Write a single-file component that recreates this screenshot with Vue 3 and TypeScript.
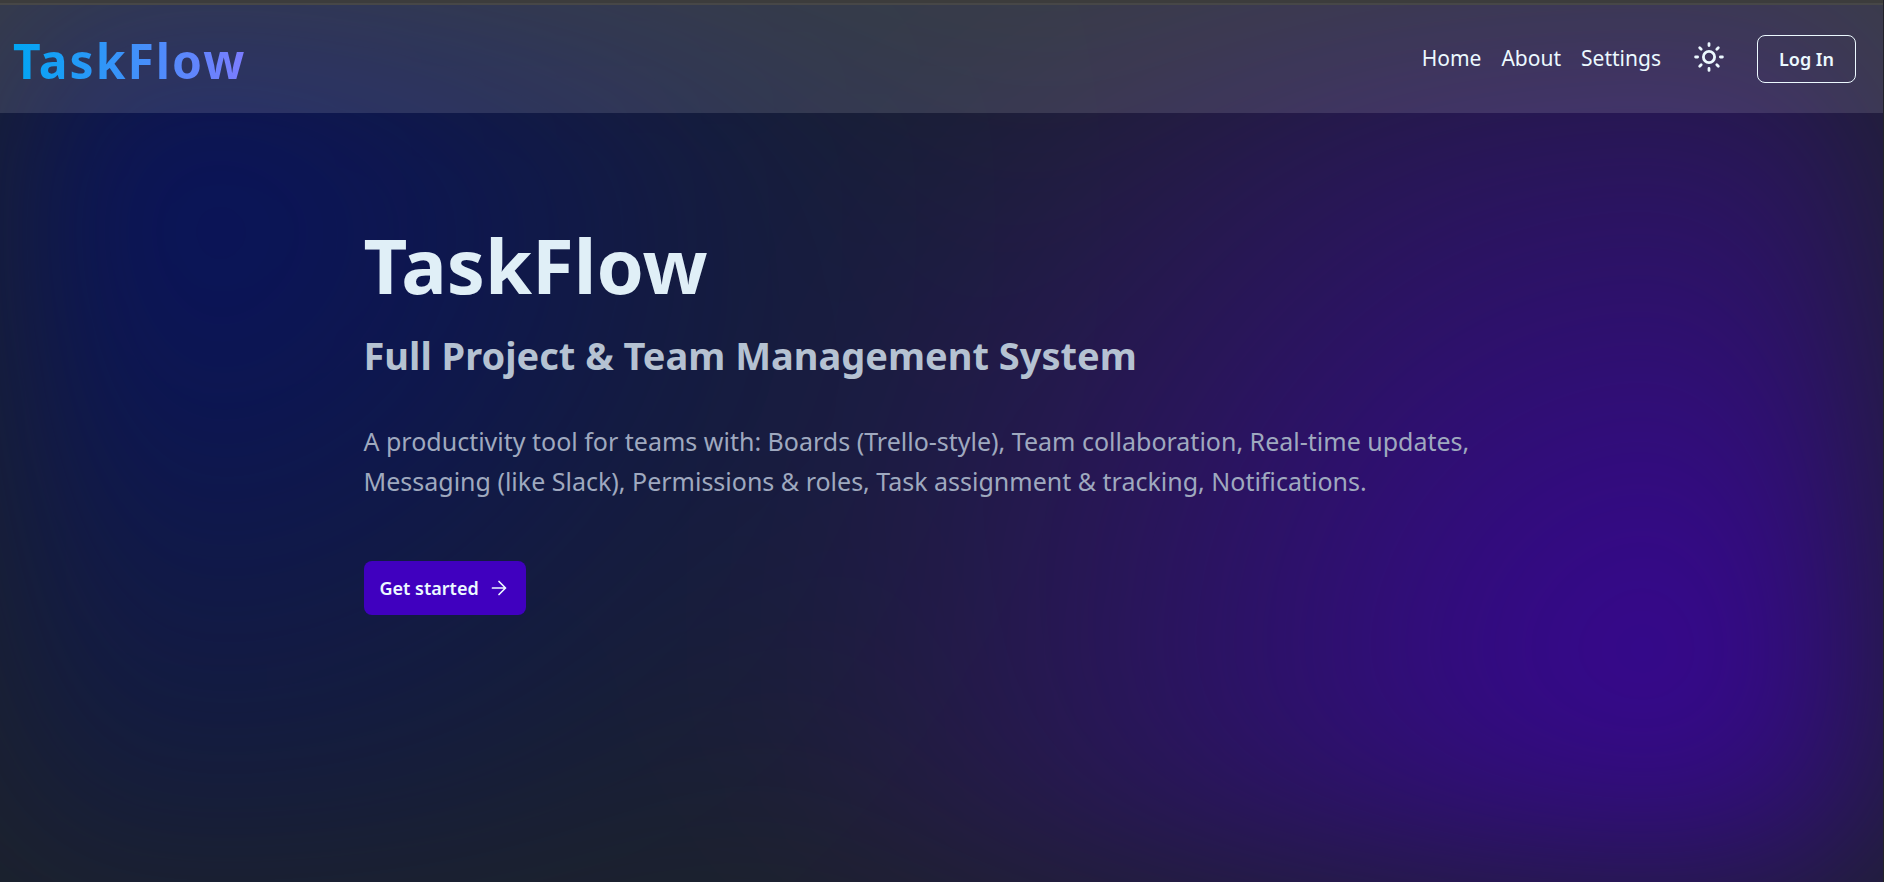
<script setup lang="ts">
interface NavLink {
  label: string
  href: string
}

const links: NavLink[] = [
  { label: 'Home', href: '#home' },
  { label: 'About', href: '#about' },
  { label: 'Settings', href: '#settings' },
]
</script>

<template>
  <div class="page">
    <div class="glow" aria-hidden="true"></div>
    <div class="strip" aria-hidden="true"></div>
    <header class="navbar">
      <a class="brand" href="#home">TaskFlow</a>
      <div class="actions">
        <nav class="links" aria-label="Main">
          <a v-for="link in links" :key="link.label" :href="link.href">{{ link.label }}</a>
        </nav>
        <button class="theme" type="button" aria-label="Switch theme">
          <svg
            viewBox="0 0 32 32"
            width="32"
            height="32"
            fill="none"
            stroke="currentColor"
            stroke-width="2.8"
            stroke-linecap="round"
            aria-hidden="true"
          >
            <circle cx="16" cy="16" r="5.6" />
            <path
              d="M16 2.600v2M16 27.400v2M2.600 16h2M27.400 16h2M6.700 6.700l1.500 1.500M23.800 23.800l1.500 1.500M6.700 25.300l1.500-1.500M23.800 8.200l1.500-1.500"
            />
          </svg>
        </button>
        <button class="login" type="button">Log In</button>
      </div>
    </header>
    <main class="hero">
      <h1>TaskFlow</h1>
      <h2>Full Project &amp; Team Management System</h2>
      <p>
        A productivity tool for teams with: Boards (Trello-style), Team collaboration, Real-time updates,
        Messaging (like Slack), Permissions &amp; roles, Task assignment &amp; tracking, Notifications.
      </p>
      <button class="cta" type="button">
        Get started
        <svg
          viewBox="0 0 16 16"
          width="16"
          height="16"
          fill="none"
          stroke="currentColor"
          stroke-width="1.7"
          stroke-linecap="round"
          stroke-linejoin="round"
          aria-hidden="true"
        >
          <path d="M1.500 8h13M8 1.500 14.500 8 8 14.500" />
        </svg>
      </button>
    </main>
  </div>
</template>

<style>
body {
  margin: 0;
  background: #1d232a;
}
</style>

<style scoped>
.page {
  position: relative;
  box-sizing: border-box;
  min-height: 100vh;
  overflow: hidden;
  isolation: isolate;
  border-right: 1px solid #222228;
  font-family: 'Noto Sans', 'Segoe UI', sans-serif;
  color: #ecf9ff;
}

.glow {
  position: absolute;
  inset: 0;
  z-index: -1;
  background:
    radial-gradient(circle at 10% 24%, rgba(4, 15, 104, 0.84), transparent 50%),
    radial-gradient(circle at 88% 76%, rgba(62, 0, 172, 0.84), transparent 54%);
  filter: blur(100px);
}

.strip {
  height: 3px;
  border-bottom: 2px solid #474747;
  background: #3c3c3c;
}

.navbar {
  display: flex;
  align-items: center;
  justify-content: space-between;
  box-sizing: border-box;
  min-height: 108px;
  padding: 0 27px 0 13px;
  background: rgba(255, 255, 255, 0.12);
}

.brand {
  padding-top: 4px;
  font-size: 48px;
  line-height: 64px;
  font-weight: 700;
  letter-spacing: 2px;
  text-decoration: none;
  color: transparent;
  background: linear-gradient(90deg, #00a6f4, #7c7cff);
  background-clip: text;
}

.actions {
  display: flex;
  align-items: center;
}

.links {
  display: flex;
  gap: 20px;
  padding-bottom: 2px;
}

.links a {
  font-size: 21px;
  line-height: 32px;
  color: inherit;
  text-decoration: none;
}

.theme {
  display: flex;
  margin: 0 32px;
  padding: 0 0 4px;
  border: 0;
  background: none;
  color: inherit;
}

.login {
  height: 48px;
  padding: 0 21px;
  border: 1px solid #ecf9ff;
  border-radius: 8px;
  background: none;
  color: inherit;
  font-family: inherit;
  font-size: 18px;
  font-weight: 600;
}

.hero {
  display: flex;
  flex-direction: column;
  align-items: flex-start;
  max-width: 1156px;
  margin: 0 auto;
  padding: 104px 0 0;
}

h1,
h2,
p {
  margin: 0;
}

h1 {
  font-size: 76px;
  line-height: 96px;
  font-weight: 700;
  color: #e0eff7;
}

h2 {
  margin-top: 14px;
  font-size: 38px;
  line-height: 56px;
  font-weight: 700;
  color: #b5c2d2;
}

p {
  margin-top: 38px;
  font-size: 25px;
  line-height: 40px;
  color: #9fa9bf;
}

.cta {
  display: flex;
  align-items: center;
  gap: 12px;
  height: 54px;
  margin-top: 60px;
  padding: 0 19px 0 16px;
  border: 0;
  border-radius: 8px;
  background: #4000bf;
  color: #ecf9ff;
  font-family: inherit;
  font-size: 18px;
  font-weight: 600;
}
</style>
